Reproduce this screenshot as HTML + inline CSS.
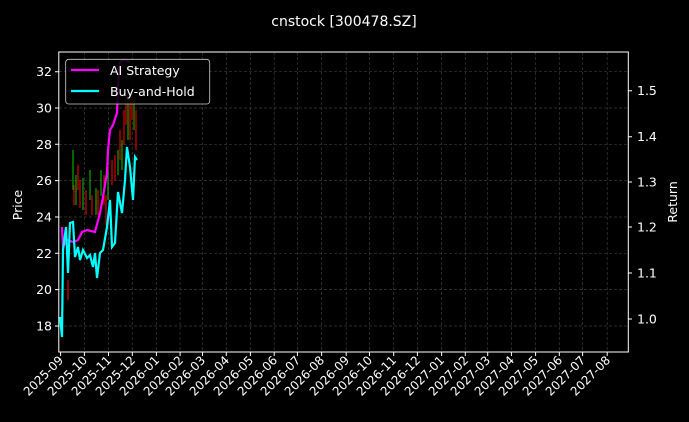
<!DOCTYPE html>
<html><head><meta charset="utf-8"><style>
html,body{margin:0;padding:0;background:#000;}
svg{display:block;font-family:"DejaVu Sans","Liberation Sans",sans-serif;}
</style></head><body>
<svg width="689" height="422" viewBox="0 0 689 422" xmlns="http://www.w3.org/2000/svg">
<rect width="689" height="422" fill="#000"/>
<text x="344" y="26" fill="#fff" font-size="14" text-anchor="middle">cnstock [300478.SZ]</text>
<g stroke="#3a3a3a" stroke-width="0.7" stroke-dasharray="3,2">
<line x1="59" x2="628" y1="71.7" y2="71.7"/><line x1="59" x2="628" y1="108" y2="108"/>
<line x1="59" x2="628" y1="144.3" y2="144.3"/><line x1="59" x2="628" y1="180.6" y2="180.6"/>
<line x1="59" x2="628" y1="217" y2="217"/><line x1="59" x2="628" y1="253.3" y2="253.3"/>
<line x1="59" x2="628" y1="289.6" y2="289.6"/><line x1="59" x2="628" y1="326" y2="326"/>
<line x1="84.4" x2="84.4" y1="52" y2="352"/><line x1="108.5" x2="108.5" y1="52" y2="352"/><line x1="132.3" x2="132.3" y1="52" y2="352"/><line x1="156.4" x2="156.4" y1="52" y2="352"/><line x1="180.1" x2="180.1" y1="52" y2="352"/><line x1="202.5" x2="202.5" y1="52" y2="352"/><line x1="226.3" x2="226.3" y1="52" y2="352"/><line x1="250.4" x2="250.4" y1="52" y2="352"/><line x1="274.2" x2="274.2" y1="52" y2="352"/><line x1="297.4" x2="297.4" y1="52" y2="352"/><line x1="321.6" x2="321.6" y1="52" y2="352"/><line x1="346.2" x2="346.2" y1="52" y2="352"/><line x1="369.5" x2="369.5" y1="52" y2="352"/><line x1="393.7" x2="393.7" y1="52" y2="352"/><line x1="417.4" x2="417.4" y1="52" y2="352"/><line x1="441.6" x2="441.6" y1="52" y2="352"/><line x1="465.3" x2="465.3" y1="52" y2="352"/><line x1="487.7" x2="487.7" y1="52" y2="352"/><line x1="511.4" x2="511.4" y1="52" y2="352"/><line x1="535.6" x2="535.6" y1="52" y2="352"/><line x1="559.3" x2="559.3" y1="52" y2="352"/><line x1="582.6" x2="582.6" y1="52" y2="352"/><line x1="607.2" x2="607.2" y1="52" y2="352"/>
</g>
<g stroke-width="1.2">
<path stroke="#0a0" d="M73 150V190M76 175V205M83 178V210M90 170V200M96 188V215M101 170V196M108 170V200M118 150V175M122 140V170M128 90V140M134 100V130"/>
<path stroke="#d00" d="M74 185V205M78 165V190M80 180V208M86 190V215M92 195V215M98 190V215M104 175V205M106 195V225M112 160V185M115 155V180M120 130V160M124 110V145M126 95V125M130 100V140M132 95V120M136 110V150M68 280V300"/>
</g>
<polyline fill="none" stroke="#ff00ff" stroke-width="2.2" points="62,227 63,247 67,240 73,242 78,240 82,232 87,230 95,232 100,213 103,197 107,173 108,150 110,130 113,125 117,113 118,87 120,62 124,60 130,62"/>
<polyline fill="none" stroke="#00ffff" stroke-width="2.2" points="60,317 62,337 63,250 66,227 68,273 70,223 73,222 75,257 78,247 80,260 83,250 87,258 90,255 93,267 95,253 97,278 100,253 103,250 107,227 110,200 112,247 115,243 118,192 122,213 125,180 127,147 130,167 133,200 135,157 137,160"/>
<rect x="58.8" y="52" width="569.5" height="300" fill="none" stroke="#fff" stroke-width="1"/>
<rect x="65.7" y="59.3" width="144" height="44.7" rx="3" fill="#000" fill-opacity="0.85" stroke="#ccc" stroke-width="0.8"/>
<line x1="71" x2="99" y1="70" y2="70" stroke="#ff00ff" stroke-width="2.2"/>
<line x1="71" x2="99" y1="91" y2="91" stroke="#00ffff" stroke-width="2.2"/>
<text x="110" y="75" fill="#fff" font-size="12.5">AI Strategy</text>
<text x="110" y="96" fill="#fff" font-size="12.5">Buy-and-Hold</text>
<g stroke="#fff"><path d="M55 71.7H59M55 108H59M55 144.3H59M55 180.6H59M55 217H59M55 253.3H59M55 289.6H59M55 326H59"/>
<path d="M628 90.7H632M628 136.7H632M628 182H632M628 227H632M628 273H632M628 319H632"/></g>
<g fill="#fff" font-size="12.5" text-anchor="end">
<text x="52" y="76.2">32</text><text x="52" y="112.5">30</text><text x="52" y="148.8">28</text><text x="52" y="185.1">26</text><text x="52" y="221.5">24</text><text x="52" y="257.8">22</text><text x="52" y="294.1">20</text><text x="52" y="330.5">18</text></g>
<g fill="#fff" font-size="12.5">
<text x="637" y="95.2">1.5</text><text x="637" y="141.2">1.4</text><text x="637" y="186.5">1.3</text><text x="637" y="231.5">1.2</text><text x="637" y="277.5">1.1</text><text x="637" y="323.5">1.0</text></g>
<text transform="translate(22,205) rotate(-90)" fill="#fff" font-size="12.5" text-anchor="middle">Price</text>
<text transform="translate(677,202) rotate(-90)" fill="#fff" font-size="12.5" text-anchor="middle">Return</text>
<g stroke="#fff"><path d="M60.6 352V356M84.4 352V356M108.5 352V356M132.3 352V356M156.4 352V356M180.1 352V356M202.5 352V356M226.3 352V356M250.4 352V356M274.2 352V356M297.4 352V356M321.6 352V356M346.2 352V356M369.5 352V356M393.7 352V356M417.4 352V356M441.6 352V356M465.3 352V356M487.7 352V356M511.4 352V356M535.6 352V356M559.3 352V356M582.6 352V356M607.2 352V356"/></g>
<g fill="#fff" font-size="12" text-anchor="end">
<text transform="translate(64,361) rotate(-45)">2025-09</text>
<text transform="translate(88,361) rotate(-45)">2025-10</text>
<text transform="translate(112,361) rotate(-45)">2025-11</text>
<text transform="translate(136,361) rotate(-45)">2025-12</text>
<text transform="translate(160,361) rotate(-45)">2026-01</text>
<text transform="translate(184,361) rotate(-45)">2026-02</text>
<text transform="translate(206,361) rotate(-45)">2026-03</text>
<text transform="translate(230,361) rotate(-45)">2026-04</text>
<text transform="translate(254,361) rotate(-45)">2026-05</text>
<text transform="translate(278,361) rotate(-45)">2026-06</text>
<text transform="translate(301,361) rotate(-45)">2026-07</text>
<text transform="translate(325,361) rotate(-45)">2026-08</text>
<text transform="translate(350,361) rotate(-45)">2026-09</text>
<text transform="translate(373,361) rotate(-45)">2026-10</text>
<text transform="translate(397,361) rotate(-45)">2026-11</text>
<text transform="translate(421,361) rotate(-45)">2026-12</text>
<text transform="translate(445,361) rotate(-45)">2027-01</text>
<text transform="translate(469,361) rotate(-45)">2027-02</text>
<text transform="translate(491,361) rotate(-45)">2027-03</text>
<text transform="translate(515,361) rotate(-45)">2027-04</text>
<text transform="translate(539,361) rotate(-45)">2027-05</text>
<text transform="translate(563,361) rotate(-45)">2027-06</text>
<text transform="translate(586,361) rotate(-45)">2027-07</text>
<text transform="translate(611,361) rotate(-45)">2027-08</text>
</g>
</svg>
</body></html>
